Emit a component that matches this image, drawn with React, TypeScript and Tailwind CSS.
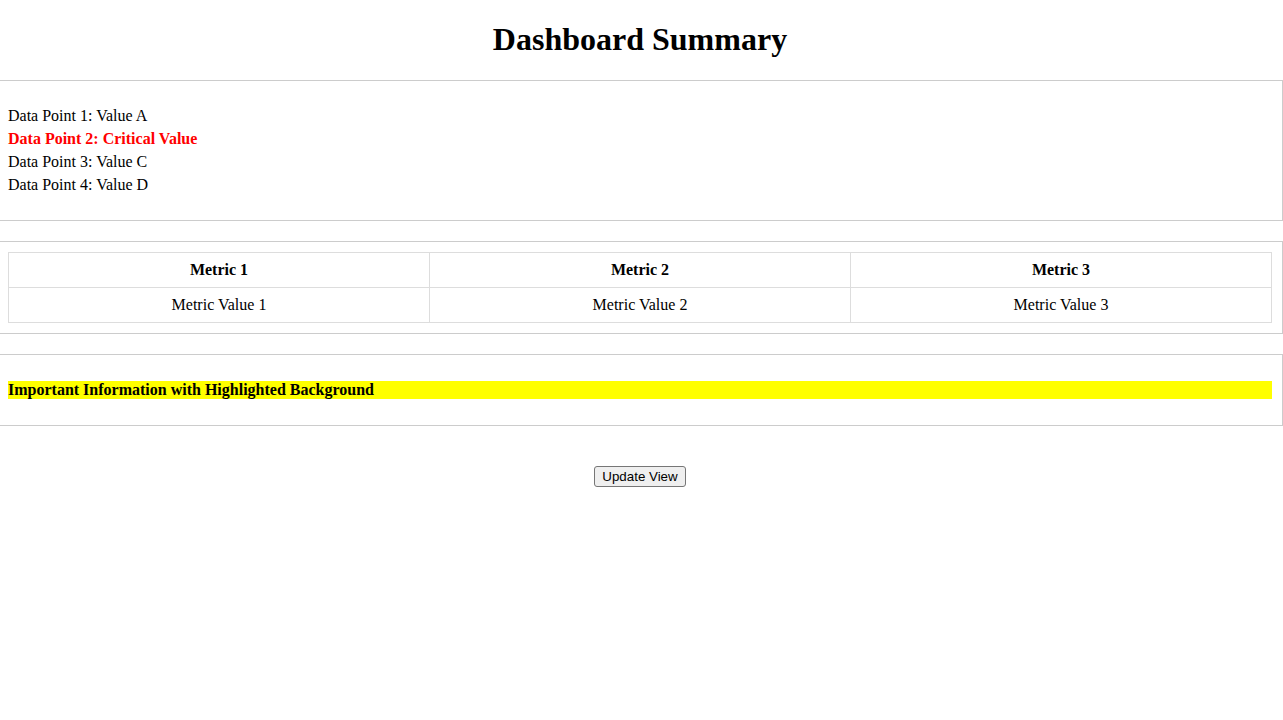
export default function App() {
  return (
    <div className="min-h-screen bg-white text-black text-[16px]" style={{ fontFamily: '"Liberation Serif", "Times New Roman", serif' }}>
      <h1 className="w-[1280px] pt-[21px] pb-[22px] text-center text-[32px] font-bold leading-[37px]">Dashboard Summary</h1>

      <section className="border-y border-r border-[#cccccc] pl-2 pr-[10px] pt-[23px] pb-[24px]">
        <div className="leading-[23px]">Data Point 1: Value A</div>
        <div className="leading-[23px] font-bold text-[#ff0000]">Data Point 2: Critical Value</div>
        <div className="leading-[23px]">Data Point 3: Value C</div>
        <div className="leading-[23px]">Data Point 4: Value D</div>
      </section>

      <section className="mt-5 border-y border-r border-[#cccccc] pl-2 pr-[10px] py-[10px]">
        <table className="w-full table-fixed border-collapse">
          <thead>
            <tr>
              <th className="h-[35px] border border-[#dddddd] px-2 text-center font-bold leading-[18px]">Metric 1</th>
              <th className="h-[35px] border border-[#dddddd] px-2 text-center font-bold leading-[18px]">Metric 2</th>
              <th className="h-[35px] border border-[#dddddd] px-2 text-center font-bold leading-[18px]">Metric 3</th>
            </tr>
          </thead>
          <tbody>
            <tr>
              <td className="h-[35px] border border-[#dddddd] px-2 text-center leading-[18px]">Metric Value 1</td>
              <td className="h-[35px] border border-[#dddddd] px-2 text-center leading-[18px]">Metric Value 2</td>
              <td className="h-[35px] border border-[#dddddd] px-2 text-center leading-[18px]">Metric Value 3</td>
            </tr>
          </tbody>
        </table>
      </section>

      <section className="mt-5 border-y border-r border-[#cccccc] pl-2 pr-[10px] py-[26px]">
        <div className="bg-[#ffff00] font-bold leading-[18px]">Important Information with Highlighted Background</div>
      </section>

      <div className="mt-10 flex w-[1280px] justify-center">
        <button
          className="h-[21px] w-[92px] rounded-[3px] border border-[#767676] bg-[#efefef] px-0 text-[13.33px] leading-[17px] text-black"
          style={{ fontFamily: '"Liberation Sans", Arial, sans-serif' }}
        >
          Update View
        </button>
      </div>
    </div>
  );
}
